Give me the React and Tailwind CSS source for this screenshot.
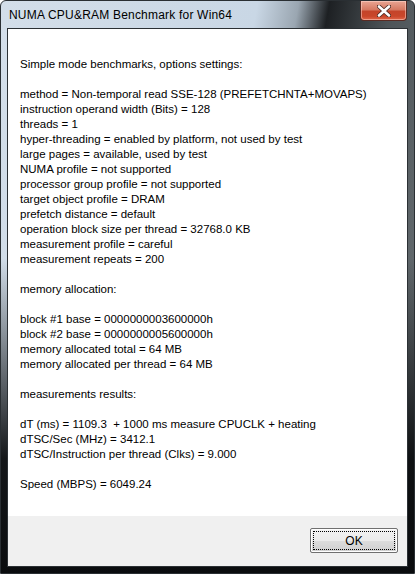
import React from 'react';

const lines = [
  'Simple mode benchmarks, options settings:',
  '',
  'method = Non-temporal read SSE-128 (PREFETCHNTA+MOVAPS)',
  'instruction operand width (Bits) = 128',
  'threads = 1',
  'hyper-threading = enabled by platform, not used by test',
  'large pages = available, used by test',
  'NUMA profile = not supported',
  'processor group profile = not supported',
  'target object profile = DRAM',
  'prefetch distance = default',
  'operation block size per thread = 32768.0 KB',
  'measurement profile = careful',
  'measurement repeats = 200',
  '',
  'memory allocation:',
  '',
  'block #1 base = 0000000003600000h',
  'block #2 base = 0000000005600000h',
  'memory allocated total = 64 MB',
  'memory allocated per thread = 64 MB',
  '',
  'measurements results:',
  '',
  'dT (ms) = 1109.3  + 1000 ms measure CPUCLK + heating',
  'dTSC/Sec (MHz) = 3412.1',
  'dTSC/Instruction per thread (Clks) = 9.000',
  '',
  'Speed (MBPS) = 6049.24',
];

const CloseButton = () => (
  <div className="absolute right-[7px] top-0 w-[47px] h-[20px] rounded-b-[4px] border border-t-0 border-[#5a2a22] bg-[linear-gradient(180deg,#e9a593_0%,#d67a63_45%,#c4442a_55%,#c9462a_80%,#e0664a_100%)] flex items-center justify-center shadow-[inset_0_0_0_1px_rgba(255,220,210,0.5)]">
    <svg width="14" height="12" viewBox="0 0 14 12">
      <path d="M2 1.5 L12 10.5 M12 1.5 L2 10.5" stroke="#4a2a24" strokeWidth="4.2" strokeLinecap="round" />
      <path d="M2 1.5 L12 10.5 M12 1.5 L2 10.5" stroke="#ffffff" strokeWidth="2.6" strokeLinecap="round" />
    </svg>
  </div>
);

export default function App() {
  return (
    <div
      className="relative w-[415px] h-[574px] overflow-hidden rounded-t-[6px] border border-[#2a2f33] bg-[linear-gradient(100deg,#d3dee9_0%,#c9d7e5_50%,#9aa6b1_58%,#1d2023_64%,#4d5458_76%,#70777b_100%)]"
      style={{ fontFamily: '"Liberation Sans", Arial, sans-serif' }}
    >
      <div className="absolute inset-0 bg-[linear-gradient(180deg,rgba(0,0,0,0)_0%,rgba(0,0,0,0)_45%,rgba(10,12,14,0.95)_80%,rgba(10,12,14,1)_100%)]" />
      <div className="relative flex flex-col h-full pl-[6px] pr-[6px] pb-[6px]">
        <div className="h-[27px] flex items-center pl-[2px] text-[12px] tracking-[0.2px] text-black leading-none">
          NUMA CPU&amp;RAM Benchmark for Win64
        </div>
        <CloseButton />
        <div className="flex-1 flex flex-col border border-[#2b3034] bg-white">
          <div className="flex-1 bg-white pt-[28px] pl-[12px] text-[11.5px] leading-[15px] text-black whitespace-pre">
            {lines.map((l, i) => (
              <div key={i} className="h-[15px]">{l}</div>
            ))}
          </div>
          <div className="h-[50px] bg-[#f0f0f0] flex items-start justify-end pt-[12px] pr-[9px]">
            <div className="w-[88px] h-[25px] border border-[#707070] rounded-[2px] bg-[linear-gradient(180deg,#f2f2f2_0%,#ebebeb_50%,#dddddd_51%,#cfcfcf_100%)] p-[2px] shadow-[inset_0_0_0_1px_#ffffff]">
              <div className="w-full h-full border border-dotted border-black flex items-center justify-center text-[12px] text-black leading-none">
                OK
              </div>
            </div>
          </div>
        </div>
      </div>
    </div>
  );
}
